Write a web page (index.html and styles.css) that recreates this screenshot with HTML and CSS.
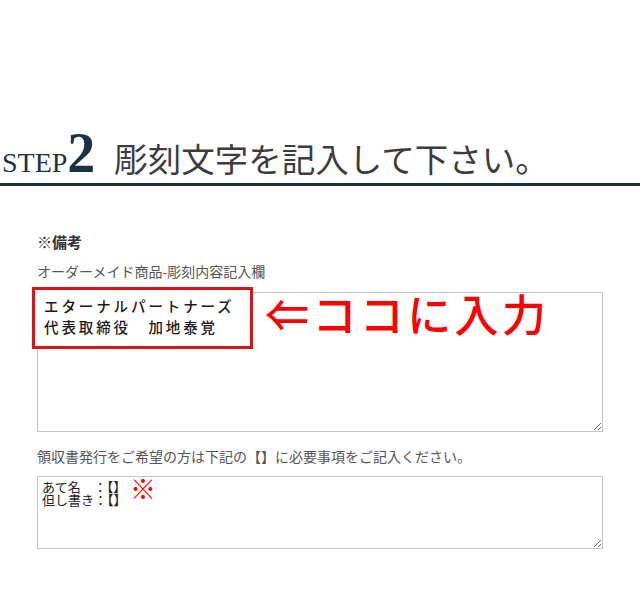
FILE: index.html
```html
<!DOCTYPE html>
<html lang="ja">
<head>
<meta charset="utf-8">
<title>彫刻文字を記入して下さい。</title>
<link rel="stylesheet" href="styles.css">
</head>
<body>
<header class="step-head">
  <h2 class="step-title"><span class="step-label">STEP</span><span class="step-num">2</span><span class="step-text">彫刻文字を記入して下さい。</span></h2>
</header>
<section class="form">
  <p class="note-title">※備考</p>
  <p class="field-label">オーダーメイド商品-彫刻内容記入欄</p>
  <div class="field engrave">
    <textarea class="box box-large" aria-label="オーダーメイド商品-彫刻内容記入欄"></textarea>
    <div class="sample">
      <div class="sample-card">
        <div class="sample-line">エターナルパートナーズ</div>
        <div class="sample-line">代表取締役　加地泰覚</div>
      </div>
      <div class="sample-hint">⇐ココに入力</div>
    </div>
  </div>
  <p class="field-label receipt-label">領収書発行をご希望の方は下記の【】に必要事項をご記入ください。</p>
  <div class="field receipt">
    <textarea class="box box-small" aria-label="領収書">あて名　：【】
但し書き：【】</textarea>
    <span class="mark">※</span>
  </div>
</section>
</body>
</html>
```
FILE: styles.css
```css
html, body {
  margin: 0;
  padding: 0;
  background: #fff;
}

body {
  width: 640px;
  font-family: "Noto Sans CJK JP", "Noto Sans", sans-serif;
  color: #333;
}

.step-head {
  padding-top: 126px;
  border-bottom: 3px solid #1b3244;
}

.step-title {
  margin: 0;
  padding: 0 0 0 2px;
  height: 57px;
  display: flex;
  align-items: baseline;
  font-weight: normal;
  line-height: 54px;
}

.step-label {
  font-family: "Liberation Serif", serif;
  font-size: 28px;
  color: #1b3244;
}

.step-num {
  font-family: "Liberation Serif", serif;
  font-weight: bold;
  font-size: 56px;
  color: #1b3244;
}

.step-text {
  font-family: "Noto Sans CJK JP", sans-serif;
  font-size: 33.5px;
  color: #3c3c3c;
  margin-left: 19px;
}

.form {
  padding: 46px 37px 0 37px;
  width: 566px;
}

.note-title {
  margin: 0;
  font-size: 15px;
  font-weight: bold;
  line-height: 20px;
  color: #333;
}

.field-label {
  margin: 9px 0 0;
  font-size: 14px;
  line-height: 20px;
  color: #555;
}

.field {
  position: relative;
  margin-top: 11px;
}

.box {
  display: block;
  box-sizing: border-box;
  width: 566px;
  margin: 0;
  border: 1px solid #c4c4c4;
  border-radius: 0;
  background: #fff;
  resize: vertical;
  outline: none;
}

.box-large {
  height: 140px;
}

.box-small {
  height: 73px;
  padding: 3px 3px 3px 4px;
  font-family: "Noto Sans CJK JP", sans-serif;
  font-size: 13px;
  line-height: 13px;
  color: #222;
}

.receipt-label {
  margin-top: 14px;
}

.receipt {
  margin-top: 10px;
}

/* sample entry overlaid on the engraving field */
.sample {
  position: absolute;
  left: -5px;
  top: -5px;
  display: flex;
  align-items: flex-start;
}

.sample-card {
  box-sizing: border-box;
  width: 221px;
  height: 62px;
  padding: 5px 0 0 9px;
  border: 3px solid #d8121b;
  background: #fff;
  display: flex;
  flex-direction: column;
  font-family: "Noto Sans CJK JP", serif;
  font-size: 14.5px;
  font-weight: 500;
  letter-spacing: 2.9px;
  color: #1a1a1a;
}

.sample-line {
  height: 21px;
  line-height: 21px;
  white-space: nowrap;
}

.sample-hint {
  margin: 0 0 0 12px;
  font-size: 44px;
  font-weight: 500;
  line-height: 52px;
  color: #f00;
  letter-spacing: 3.4px;
}

.mark {
  position: absolute;
  left: 93px;
  top: -2px;
  font-size: 26px;
  line-height: 28px;
  color: #f00;
}
```
